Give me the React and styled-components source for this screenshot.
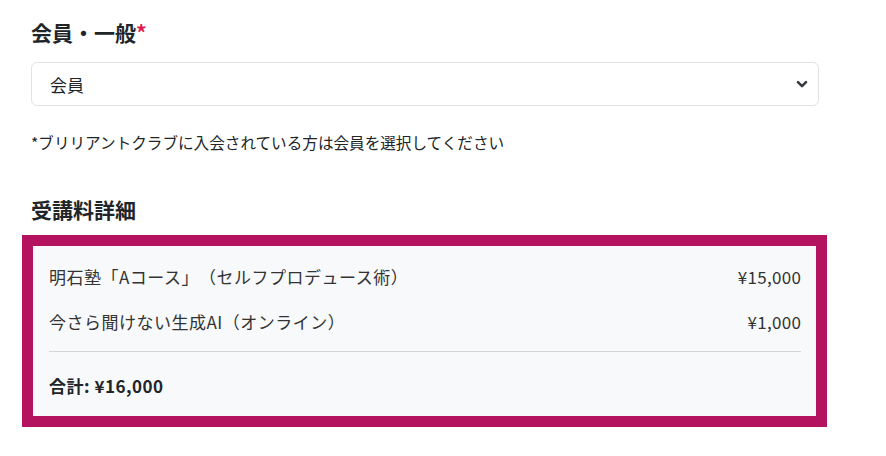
import React from 'react'
import styled, { createGlobalStyle } from 'styled-components'

const GlobalStyle = createGlobalStyle`
  body {
    margin: 0;
    background: #fff;
    font-family: "Noto Sans CJK JP", "Noto Sans", sans-serif;
    color: #212529;
    text-spacing-trim: space-all;
  }
`

const fees = [
    { name: '明石塾「Aコース」（セルフプロデュース術）', price: 15000 },
    { name: '今さら聞けない生成AI（オンライン）', price: 1000 },
]

const yen = n => '¥' + n.toLocaleString('en-US')

function App() {
    const total = fees.reduce((s, f) => s + f.price, 0)
    return (
        <>
            <GlobalStyle />
            <Page>
                <Label>会員・一般<Req>*</Req></Label>
                <SelectBox>
                    <span>会員</span>
                    <svg width="12" height="9" viewBox="0 0 12 9">
                        <path d="M2 2.2 6 6.2 10 2.2" fill="none" stroke="#343a40" strokeWidth="2.6" strokeLinecap="round" strokeLinejoin="round" />
                    </svg>
                </SelectBox>
                <Note>*ブリリアントクラブに入会されている方は会員を選択してください</Note>
                <Heading>受講料詳細</Heading>
                <FeeBox>
                    {fees.map(f => (
                        <FeeRow key={f.name}>
                            <span>{f.name}</span>
                            <span>{yen(f.price)}</span>
                        </FeeRow>
                    ))}
                    <Divider />
                    <Total>合計: {yen(total)}</Total>
                </FeeBox>
            </Page>
        </>
    )
}

const Page = styled.div`
 width: 788px;
 padding: 17px 0 0 31px;
 display: flex;
 flex-direction: column;
`

const Label = styled.div`
 font-size: 21px;
 font-weight: 700;
 line-height: 30px;
 color: #212529;
`

const Req = styled.span`
 color: #e01a4f;
`

const SelectBox = styled.div`
 margin-top: 15px;
 height: 44px;
 box-sizing: border-box;
 border: 1px solid #dee2e6;
 border-radius: 6px;
 background: #fff;
 display: flex;
 align-items: center;
 justify-content: space-between;
 padding: 0 10px 0 18px;
 font-size: 17px;
 color: #212529;
`

const Note = styled.p`
 margin: 25px 0 0;
 font-size: 15.6px;
 line-height: 22px;
 color: #212529;
`

const Heading = styled.h3`
 margin: 41px 0 0;
 font-size: 21px;
 font-weight: 700;
 line-height: 30px;
`

const FeeBox = styled.div`
 margin: 11px 0 0 -9px;
 width: 805px;
 box-sizing: border-box;
 border: 11px solid #b3135f;
 background: #f8f9fa;
 padding: 18px 15px 18px 16px;
 display: flex;
 flex-direction: column;
`

const FeeRow = styled.div`
 display: flex;
 justify-content: space-between;
 font-size: 17px;
 letter-spacing: 0.5px;
 line-height: 25px;
 color: #333;
 & + & {
   margin-top: 20px;
 }
 span:last-child {
   letter-spacing: 0.3px;
   margin-right: -0.3px;
 }
`

const Divider = styled.hr`
 margin: 17px 0 0;
 border: 0;
 border-top: 1px solid #d3d5d8;
`

const Total = styled.div`
 margin-top: 21px;
 font-size: 17px;
 font-weight: 700;
 letter-spacing: 0.5px;
 line-height: 25px;
`

export default App
